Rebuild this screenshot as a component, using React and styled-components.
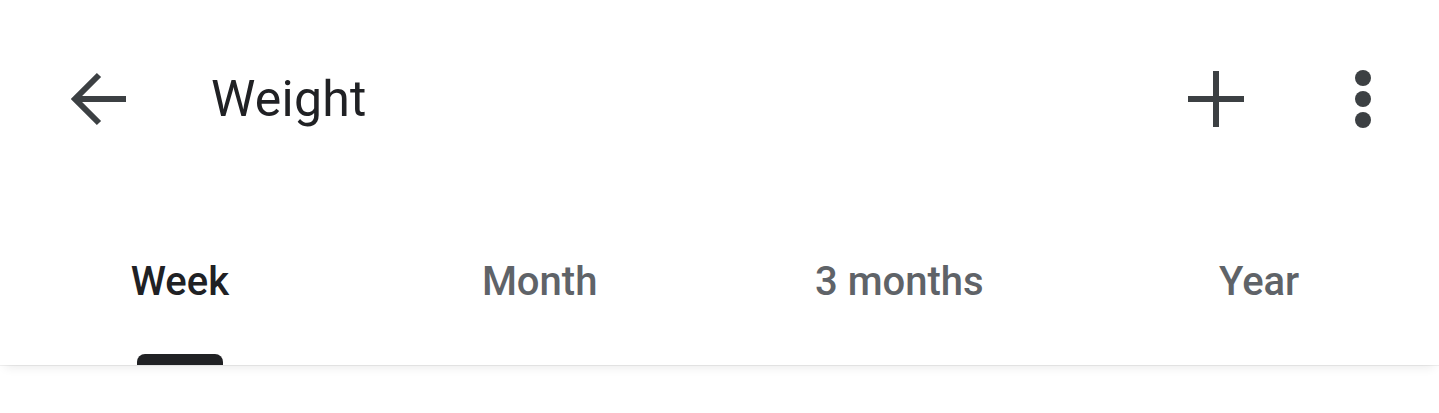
import React, { useState } from "react";
import styled, { createGlobalStyle } from "styled-components";

const GlobalStyle = createGlobalStyle`
  html, body {
    margin: 0;
    padding: 0;
    background: #fff;
    font-family: Roboto, "Noto Sans", "Liberation Sans", sans-serif;
  }
`;

const Page = styled.div`
  width: 1439px;
  height: 413px;
  overflow: hidden;
  background: #fff;
`;

const TopBar = styled.header`
  height: 198px;
  display: flex;
  align-items: center;
  padding: 0 28px 0 50px;
  box-sizing: border-box;
`;

const IconButton = styled.button`
  width: 96px;
  height: 96px;
  border: 0;
  padding: 0;
  background: transparent;
  display: flex;
  align-items: center;
  justify-content: center;
  color: #3c4043;
  cursor: pointer;
`;

const Title = styled.h1`
  margin: 0 0 0 65px;
  flex: 1;
  font-size: 50px;
  font-weight: 400;
  color: #202124;
  letter-spacing: 0.2px;
`;

const Actions = styled.div`
  display: flex;
  align-items: center;
  gap: 51px;
`;

const TabBar = styled.nav`
  height: 167px;
  display: grid;
  grid-template-columns: repeat(4, 1fr);
  box-shadow: 0 1px 0 rgba(0, 0, 0, 0.06), 0 7px 10px -5px rgba(0, 0, 0, 0.09);
  position: relative;
`;

const Tab = styled.button`
  position: relative;
  border: 0;
  background: transparent;
  padding: 0 0 60px;
  display: flex;
  align-items: flex-end;
  justify-content: center;
  font-family: inherit;
  font-size: 40px;
  font-weight: 500;
  color: ${(p) => (p.$active ? "#202124" : "#5f6368")};
  cursor: pointer;
`;

const Indicator = styled.span`
  position: absolute;
  bottom: 0;
  left: 50%;
  width: 86px;
  height: 11px;
  margin-left: -43px;
  background: #202124;
  border-radius: 8px 8px 0 0;
`;

const BackIcon = () => (
  <svg width="60" height="60" viewBox="0 0 60 60" fill="none">
    <path
      d="M58 30H8M31 6L7 30l24 24"
      stroke="currentColor"
      strokeWidth="6"
    />
  </svg>
);

const PlusIcon = () => (
  <svg width="56" height="56" viewBox="0 0 56 56" fill="none">
    <path d="M28 0v56M0 28h56" stroke="currentColor" strokeWidth="6" />
  </svg>
);

const MoreIcon = () => (
  <svg width="16" height="60" viewBox="0 0 16 60" fill="currentColor">
    <circle cx="8" cy="9" r="8" />
    <circle cx="8" cy="30" r="8" />
    <circle cx="8" cy="51" r="8" />
  </svg>
);

const tabs = ["Week", "Month", "3 months", "Year"];

export default function App() {
  const [active, setActive] = useState(0);
  return (
    <>
      <GlobalStyle />
      <Page>
        <TopBar>
          <IconButton aria-label="Back">
            <BackIcon />
          </IconButton>
          <Title>Weight</Title>
          <Actions>
            <IconButton aria-label="Add">
              <PlusIcon />
            </IconButton>
            <IconButton aria-label="More">
              <MoreIcon />
            </IconButton>
          </Actions>
        </TopBar>
        <TabBar>
          {tabs.map((t, i) => (
            <Tab key={t} $active={i === active} onClick={() => setActive(i)}>
              {t}
              {i === active && <Indicator />}
            </Tab>
          ))}
        </TabBar>
      </Page>
    </>
  );
}
